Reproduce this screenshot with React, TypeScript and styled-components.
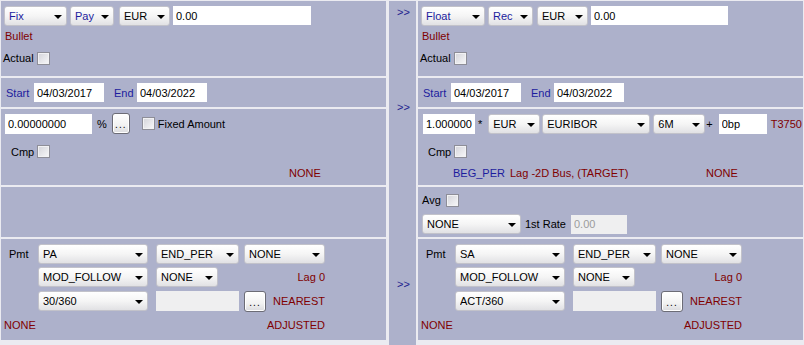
import React from 'react';
import styled, { createGlobalStyle } from 'styled-components';

type Tone = 'ink' | 'blue' | 'red' | 'link';

const PANEL = '#adb1cb';
const LIGHT = '#ebebf1';
const tones: Record<Tone, string> = {
  ink: '#000000',
  blue: '#1c1c9e',
  red: '#800000',
  link: '#22228e',
};

const GlobalStyle = createGlobalStyle`
  html, body {
    margin: 0;
    padding: 0;
    background: ${LIGHT};
  }
  body {
    font-family: "Liberation Sans", Arial, sans-serif;
    font-size: 11px;
    color: #000;
  }
`;

const Screen = styled.div`
  display: flex;
  align-items: flex-start;
  width: 804px;
  height: 345px;
  box-sizing: border-box;
  padding: 1px 1px 0 1px;
  background: ${LIGHT};
`;

const Leg = styled.div`
  width: 385px;
  flex: none;
  display: flex;
  flex-direction: column;
  gap: 2px;
`;

const Gutter = styled.div`
  align-self: stretch;
  flex: none;
  width: 27px;
  margin: 0 2px 0 3px;
  box-sizing: border-box;
  padding: 4px 0 0 8px;
  background: ${PANEL};
  display: flex;
  flex-direction: column;
`;

const CopyLink = styled.span<{ $mt: number }>`
  margin-top: ${({ $mt }) => $mt}px;
  height: 14px;
  line-height: 14px;
  color: ${tones.link};
  cursor: pointer;
`;

const Section = styled.div<{ $h: number; $pad?: string }>`
  height: ${({ $h }) => $h}px;
  box-sizing: border-box;
  padding: ${({ $pad }) => $pad ?? '0'};
  background: ${PANEL};
  display: flex;
  flex-direction: column;
`;

const Line = styled.div<{ $h: number; $mt?: number; $pl?: number }>`
  display: flex;
  align-items: center;
  height: ${({ $h }) => $h}px;
  margin-top: ${({ $mt }) => $mt ?? 0}px;
  padding-left: ${({ $pl }) => $pl ?? 0}px;
  white-space: nowrap;
`;

const Label = styled.span<{ $w?: number; $ml?: number; $tone?: Tone; $end?: boolean }>`
  flex: none;
  width: ${({ $w }) => ($w ? `${$w}px` : 'auto')};
  margin-left: ${({ $ml }) => $ml ?? 0}px;
  color: ${({ $tone }) => tones[$tone ?? 'ink']};
  justify-self: ${({ $end }) => ($end ? 'end' : 'start')};
  line-height: 14px;
  white-space: nowrap;
`;

const ComboBox = styled.div<{ $w: number; $ml?: number; $tone?: Tone }>`
  flex: none;
  box-sizing: border-box;
  width: ${({ $w }) => $w}px;
  height: 20px;
  margin-left: ${({ $ml }) => $ml ?? 0}px;
  padding: 0 4px 0 4px;
  display: flex;
  align-items: center;
  border: 1px solid #c2c2ca;
  border-radius: 3px;
  background: linear-gradient(#ffffff, #f5f5f5 50%, #e1e1e4);
  color: ${({ $tone }) => tones[$tone ?? 'ink']};
`;

const ComboText = styled.span`
  flex: 1;
  overflow: hidden;
  white-space: nowrap;
  line-height: 14px;
`;

const ArrowMark = styled.svg`
  flex: none;
  margin-top: 2px;
`;

const Field = styled.input<{ $w: number; $h?: number; $ml?: number; $off?: boolean }>`
  flex: none;
  box-sizing: border-box;
  width: ${({ $w }) => $w}px;
  height: ${({ $h }) => $h ?? 20}px;
  margin: 0 0 0 ${({ $ml }) => $ml ?? 0}px;
  padding: 0 0 0 3px;
  border: none;
  outline: none;
  font: inherit;
  background: ${({ $off }) => ($off ? '#efeff0' : '#ffffff')};
  color: ${({ $off }) => ($off ? '#9c9c9c' : '#000000')};
`;

const Tick = styled.span<{ $ml?: number }>`
  flex: none;
  width: 13px;
  height: 13px;
  box-sizing: border-box;
  margin-left: ${({ $ml }) => $ml ?? 0}px;
  border: 1px solid #8e8e98;
  box-shadow: inset 0 0 0 1px #f2f2f4;
  background: linear-gradient(135deg, #d3d3d9, #f8f8fa);
`;

const DotsButton = styled.div<{ $w: number; $ml?: number }>`
  flex: none;
  box-sizing: border-box;
  width: ${({ $w }) => $w}px;
  height: 21px;
  margin-left: ${({ $ml }) => $ml ?? 0}px;
  padding-bottom: 4px;
  display: flex;
  align-items: flex-end;
  justify-content: center;
  border: 1px solid #6c6c76;
  border-radius: 3px;
  box-shadow: inset 0 0 0 1px #ffffff;
  background: linear-gradient(#ffffff, #f2f2f2 60%, #dadade);
  font-size: 10px;
  line-height: 8px;
  letter-spacing: 1px;
`;

const StatusGrid = styled.div`
  display: grid;
  grid-template-columns: 57px 196px auto;
  align-items: center;
  height: 14px;
  margin-top: 8px;
  padding-left: 31px;
  white-space: nowrap;
`;

const ScheduleGrid = styled.div`
  display: grid;
  grid-template-columns: 34px 118px 88px 81px;
  grid-template-rows: 20px 20px 22px 20px;
  row-gap: 3px;
  align-items: center;
`;

const SplitCell = styled.div`
  display: flex;
  align-items: center;
  justify-content: space-between;
`;

const Combo = ({ w, ml, tone, children }: { w: number; ml?: number; tone?: Tone; children: React.ReactNode }) => (
  <ComboBox $w={w} $ml={ml} $tone={tone}>
    <ComboText>{children}</ComboText>
    <ArrowMark width="8" height="4" viewBox="0 0 8 4">
      <path d="M0 0h8L4 4z" fill="#000" />
    </ArrowMark>
  </ComboBox>
);

type Choice = { text: string; w: number; ml?: number; tone?: Tone };

const HeaderSection = ({ choices, amount }: { choices: Choice[]; amount: { w: number } }) => (
  <Section $h={75} $pad="4px 0 0 3px">
    <Line $h={21}>
      {choices.map((c) => (
        <Combo key={c.text} w={c.w} ml={c.ml} tone={c.tone}>{c.text}</Combo>
      ))}
      <Field $w={amount.w} $h={19} $ml={3} readOnly defaultValue="0.00" />
    </Line>
    <Line $h={14} $mt={3} $pl={1}>
      <Label $tone="red">Bullet</Label>
    </Line>
    <Line $h={14} $mt={8}>
      <Label $w={34} $ml={-1}>Actual</Label>
      <Tick />
    </Line>
  </Section>
);

const DatesSection = () => (
  <Section $h={29} $pad="0 0 0 5px">
    <Line $h={29}>
      <Label $w={28} $tone="blue">Start</Label>
      <Field $w={70} $h={19} readOnly defaultValue="04/03/2017" />
      <Label $w={23} $ml={10} $tone="blue">End</Label>
      <Field $w={70} $h={19} readOnly defaultValue="04/03/2022" />
    </Line>
  </Section>
);

const FixedRateSection = () => (
  <Section $h={76} $pad="4px 0 0 4px">
    <Line $h={21}>
      <Field $w={87} readOnly defaultValue="0.00000000" />
      <Label $ml={5}>%</Label>
      <DotsButton $w={18} $ml={5}>...</DotsButton>
      <Tick $ml={12} />
      <Label $ml={3}>Fixed Amount</Label>
    </Line>
    <Line $h={13} $mt={11} $pl={6}>
      <Label $w={26}>Cmp</Label>
      <Tick />
    </Line>
    <StatusGrid>
      <span />
      <span />
      <Label $tone="red">NONE</Label>
    </StatusGrid>
  </Section>
);

const FloatRateSection = () => (
  <Section $h={76} $pad="4px 0 0 4px">
    <Line $h={21}>
      <Field $w={52} $ml={1} readOnly defaultValue="1.000000" />
      <Label $ml={3}>*</Label>
      <Combo w={52} ml={6}>EUR</Combo>
      <Combo w={108} ml={2}>EURIBOR</Combo>
      <Combo w={52} ml={3}>6M</Combo>
      <Label $ml={1}>+</Label>
      <Field $w={48} $ml={6} readOnly defaultValue="0bp" />
      <Label $ml={4} $tone="red">T3750</Label>
    </Line>
    <Line $h={13} $mt={11} $pl={6}>
      <Label $w={26}>Cmp</Label>
      <Tick />
    </Line>
    <StatusGrid>
      <Label $tone="blue">BEG_PER</Label>
      <Label $tone="red">Lag -2D Bus, (TARGET)</Label>
      <Label $tone="red">NONE</Label>
    </StatusGrid>
  </Section>
);

const AveragingSection = ({ active }: { active: boolean }) => (
  <Section $h={50} $pad="6px 0 0 4px">
    {active && (
      <>
        <Line $h={14}>
          <Label $w={24}>Avg</Label>
          <Tick />
        </Line>
        <Line $h={20} $mt={7}>
          <Combo w={99}>NONE</Combo>
          <Label $w={46} $ml={4}>1st Rate</Label>
          <Field $w={56} $h={19} $off readOnly defaultValue="0.00" />
        </Line>
      </>
    )}
  </Section>
);

const ScheduleSection = ({ frequency, dayCount }: { frequency: string; dayCount: string }) => (
  <Section $h={101} $pad="5px 0 0 3px">
    <ScheduleGrid>
      <Label $ml={5}>Pmt</Label>
      <Combo w={110}>{frequency}</Combo>
      <Combo w={83}>END_PER</Combo>
      <Combo w={81}>NONE</Combo>

      <span />
      <Combo w={110}>MOD_FOLLOW</Combo>
      <Combo w={62}>NONE</Combo>
      <Label $tone="red" $end>Lag 0</Label>

      <span />
      <Combo w={110}>{dayCount}</Combo>
      <Field $w={83} $off readOnly defaultValue="" />
      <SplitCell>
        <DotsButton $w={22}>...</DotsButton>
        <Label $tone="red">NEAREST</Label>
      </SplitCell>

      <Label $tone="red">NONE</Label>
      <span />
      <span />
      <Label $tone="red" $end>ADJUSTED</Label>
    </ScheduleGrid>
  </Section>
);

const App = () => (
  <>
    <GlobalStyle />
    <Screen>
      <Leg>
        <HeaderSection
          choices={[
            { text: 'Fix', w: 63, tone: 'blue' },
            { text: 'Pay', w: 44, ml: 3, tone: 'blue' },
            { text: 'EUR', w: 51, ml: 5 },
          ]}
          amount={{ w: 138 }}
        />
        <DatesSection />
        <FixedRateSection />
        <AveragingSection active={false} />
        <ScheduleSection frequency="PA" dayCount="30/360" />
      </Leg>

      <Gutter>
        <CopyLink $mt={0}>&gt;&gt;</CopyLink>
        <CopyLink $mt={81}>&gt;&gt;</CopyLink>
        <CopyLink $mt={163}>&gt;&gt;</CopyLink>
      </Gutter>

      <Leg>
        <HeaderSection
          choices={[
            { text: 'Float', w: 64, tone: 'blue' },
            { text: 'Rec', w: 45, ml: 3, tone: 'blue' },
            { text: 'EUR', w: 51, ml: 4 },
          ]}
          amount={{ w: 137 }}
        />
        <DatesSection />
        <FloatRateSection />
        <AveragingSection active />
        <ScheduleSection frequency="SA" dayCount="ACT/360" />
      </Leg>
    </Screen>
  </>
);

export default App;
